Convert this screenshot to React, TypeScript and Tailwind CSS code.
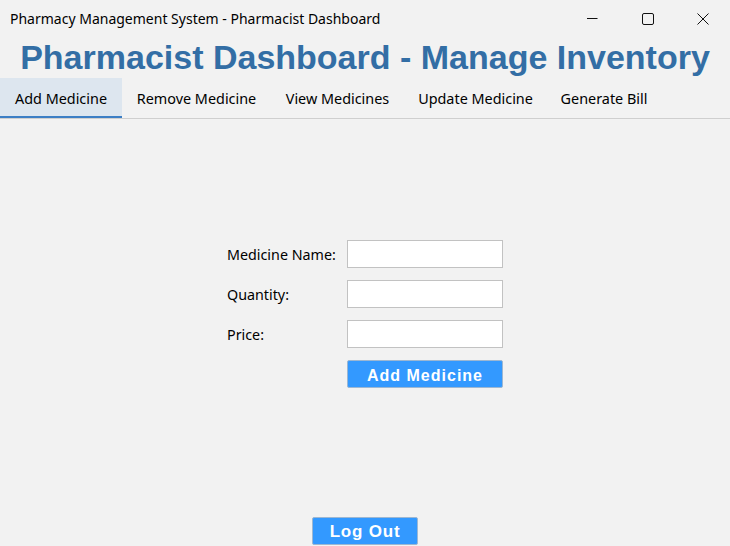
import { useState } from "react";

const tabs = [
  { label: "Add Medicine", w: "w-[122px]" },
  { label: "Remove Medicine", w: "w-[149px]" },
  { label: "View Medicines", w: "w-[133px]" },
  { label: "Update Medicine", w: "w-[143px]" },
  { label: "Generate Bill", w: "w-[114px]" },
];

const fields = ["Medicine Name:", "Quantity:", "Price:"];

export default function App() {
  const [active, setActive] = useState(0);

  return (
    <div className="w-[730px] h-[546px] bg-[#f2f2f2] flex flex-col overflow-hidden font-['Noto_Sans',sans-serif] text-black">
      {/* Title bar */}
      <div className="h-[37px] flex items-center justify-between pl-[10px]">
        <span className="text-[14px] leading-none">
          Pharmacy Management System - Pharmacist Dashboard
        </span>
        <div className="flex h-full">
          <div className="w-[55px] flex items-center justify-center">
            <svg width="11" height="11" viewBox="0 0 11 11">
              <path d="M0 5.5h10.5" stroke="#111" strokeWidth="1" />
            </svg>
          </div>
          <div className="w-[55px] flex items-center justify-center">
            <svg width="12" height="12" viewBox="0 0 12 12">
              <rect x="0.5" y="0.5" width="11" height="11" rx="1.5" fill="none" stroke="#111" strokeWidth="1" />
            </svg>
          </div>
          <div className="w-[55px] flex items-center justify-center">
            <svg width="12" height="12" viewBox="0 0 12 12">
              <path d="M0.5 0.5l11 11M11.5 0.5l-11 11" stroke="#111" strokeWidth="1" />
            </svg>
          </div>
        </div>
      </div>

      {/* Heading */}
      <h1 className="h-[41px] flex items-center justify-center font-['Liberation_Sans',Arial,sans-serif] font-bold text-[34px] leading-none text-[#336ea5] pb-[2px]">
        Pharmacist Dashboard - Manage Inventory
      </h1>

      {/* Tabs */}
      <div className="flex h-[41px] border-b border-[#cfcfcf]">
        {tabs.map((t, i) => (
          <button
            key={t.label}
            onClick={() => setActive(i)}
            className={
              i === active
                ? `${t.w} h-full text-[14.4px] whitespace-nowrap bg-[#dde6ef] border-b-2 border-[#3c7fc5] pt-[4px]`
                : `${t.w} h-full text-[14.4px] whitespace-nowrap border-b-2 border-transparent pt-[4px]`
            }
          >
            {t.label}
          </button>
        ))}
      </div>

      {/* Form */}
      <div className="flex justify-center pt-[121px]">
        <div className="flex flex-col gap-[12px]">
          {fields.map((f) => (
            <div key={f} className="flex items-center">
              <label className="w-[120px] text-[14.3px] pt-[2px]">{f}</label>
              <input
                type="text"
                className="w-[156px] h-[28px] bg-white border border-[#c2c2c2] outline-none px-1 text-[14px]"
              />
            </div>
          ))}
          <div className="flex">
            <div className="w-[120px]" />
            <button className="w-[156px] h-[28px] bg-[#3399ff] border border-[#9db7d2] rounded-[2px] text-white font-['Liberation_Sans',Arial,sans-serif] font-bold text-[16px] tracking-[1px] pt-[3px]">
              Add Medicine
            </button>
          </div>
        </div>
      </div>

      {/* Footer */}
      <div className="flex-1 flex items-end justify-center pb-[1px]">
        <button className="w-[106px] h-[28px] bg-[#3399ff] border border-[#9db7d2] rounded-[2px] text-white font-['Liberation_Sans',Arial,sans-serif] font-bold text-[17px] tracking-[0.8px] pt-[1px]">
          Log Out
        </button>
      </div>
    </div>
  );
}
